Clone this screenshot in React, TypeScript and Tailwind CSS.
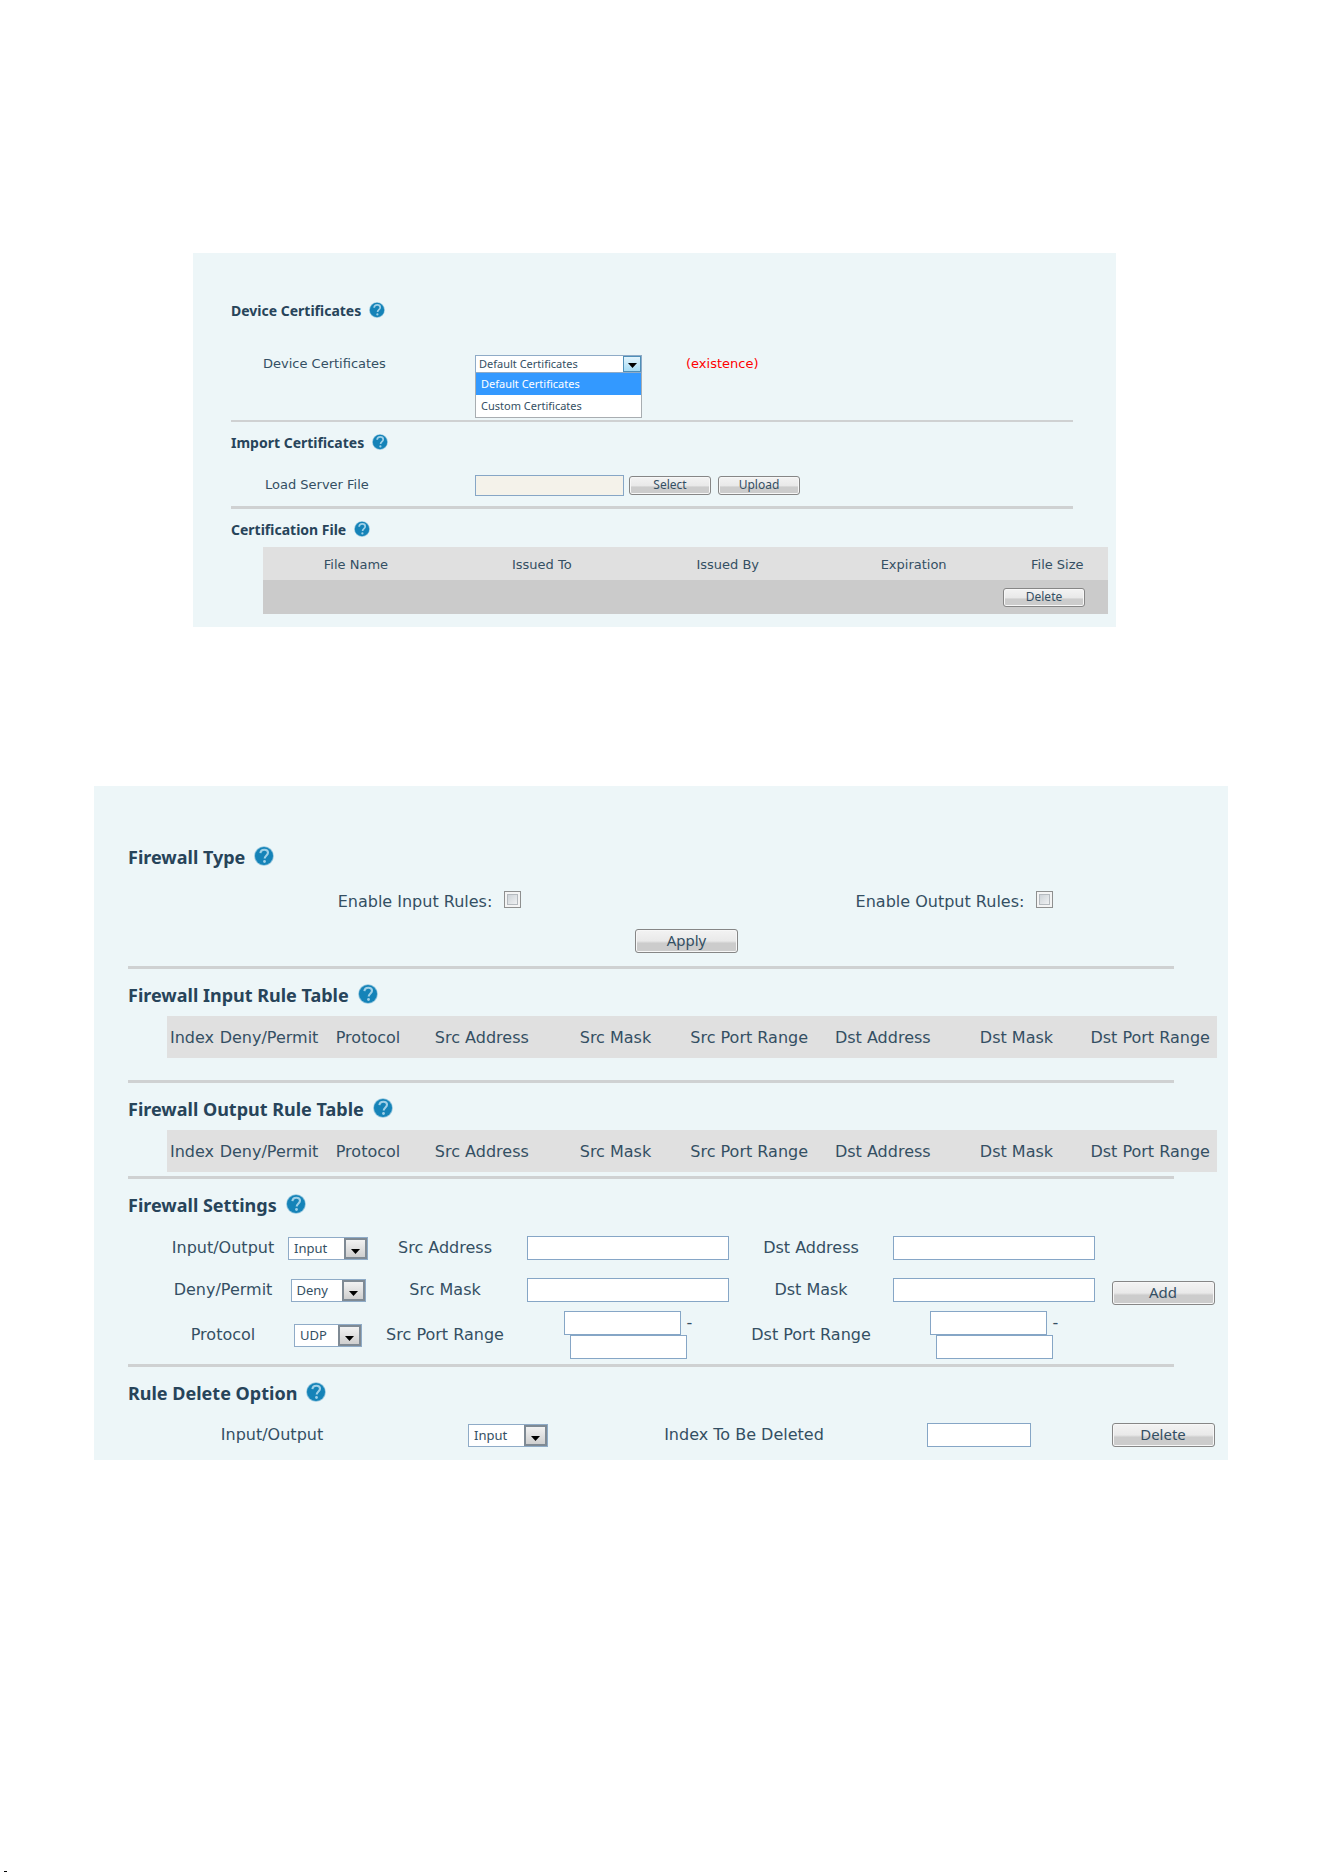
import { useState } from "react";
import type { ReactNode } from "react";
import clsx from "clsx";

type Size = "sm" | "lg";

const certificateOptions = ["Default Certificates", "Custom Certificates"];

const HelpIcon = ({ size }: { size: Size }) => (
  <svg viewBox="0 0 20 20" className={size === "sm" ? "size-4" : "size-5"} aria-hidden="true">
    <circle cx="10" cy="10" r="9.8" fill="#8fc3dc" />
    <circle cx="10" cy="10" r="9" fill="#1583b8" />
    <path
      d="M6.4 7.2C6.6 4.8 8.2 3.7 10.3 3.7c2.2 0 3.7 1.2 3.7 3.1 0 2.6-3.3 2.8-3.3 5.7"
      fill="none"
      stroke="#9fd0e7"
      strokeWidth="2.1"
    />
    <circle cx="10.5" cy="15.5" r="1.4" fill="#9fd0e7" />
  </svg>
);

const Heading = ({ size, className, children }: { size: Size; className?: string; children: ReactNode }) => (
  <div className={clsx("flex items-center", size === "sm" ? "h-5 gap-2" : "h-6 gap-[9px]", className)}>
    <h2
      className={clsx(
        "font-['Noto_Sans',sans-serif] font-bold text-[#27445a]",
        size === "sm" ? "text-[14px] leading-5" : "text-[18px] leading-6"
      )}
    >
      {children}
    </h2>
    <button type="button" aria-label="Help" className="mb-[3px]">
      <HelpIcon size={size} />
    </button>
  </div>
);

const Button = ({ size, children }: { size: Size; children: ReactNode }) => (
  <button
    type="button"
    className={clsx(
      "rounded-[3px] border border-[#868686] bg-linear-to-b from-[#f3f3f3] from-0% via-[#e9e9e9] via-50% to-[#cccccc] to-60% font-['Noto_Sans',sans-serif] shadow-[inset_0_0_0_1px_#f7f7f7]",
      size === "sm" ? "h-[19px] w-[82px] text-[12px] leading-4" : "h-6 w-[103px] pb-[2px] text-[15px] leading-5"
    )}
  >
    {children}
  </button>
);

const Arrow = () => (
  <svg viewBox="0 0 9 5" className="h-[5px] w-[9px]" aria-hidden="true">
    <path d="M0 0h9L4.5 5z" fill="#000" />
  </svg>
);

const Select = ({ id, options, className }: { id: string; options: string[]; className: string }) => (
  <div className={clsx("relative h-[23px]", className)}>
    <select
      id={id}
      className="block h-full w-full appearance-none border border-[#8fabc7] bg-white pl-[5px] font-['Noto_Sans',sans-serif] text-[13px] leading-5 outline-none"
    >
      {options.map((o) => (
        <option key={o}>{o}</option>
      ))}
    </select>
    <span className="pointer-events-none absolute inset-y-px right-px flex w-[23px] items-end justify-center border-2 border-[#7f8a94] bg-linear-to-b from-[#f2f2f2] to-[#cfcfcf] pb-[3px]">
      <Arrow />
    </span>
  </div>
);

const TextBox = ({ id, label, className }: { id: string; label?: string; className: string }) => (
  <input
    id={id}
    type="text"
    aria-label={label}
    className={clsx("block border border-[#86a6c6] bg-white px-1 outline-none", className)}
  />
);

const Divider = ({ className }: { className: string }) => (
  <hr className={clsx("border-0 bg-[#cfd1d2]", className)} />
);

const CheckField = ({ id, label }: { id: string; label: string }) => (
  <div className="flex h-6 items-center justify-center gap-3">
    <label htmlFor={id}>{label}</label>
    <input
      id={id}
      type="checkbox"
      className="mb-[5px] size-[17px] appearance-none border border-[#8e8f8f] bg-linear-to-br from-[#c3cad0] to-[#fafafa] shadow-[inset_0_0_0_2px_#f4f4f4,inset_0_0_0_3px_#b5babf] checked:from-[#5b7f9c] checked:to-[#5b7f9c]"
    />
  </div>
);

const RuleTable = () => (
  <table className="mt-[9px] ml-[39px] w-[calc(100%-39px)] table-fixed bg-[#e0e0e0]">
    <colgroup>
      <col className="w-[50px]" />
      <col className="w-[104px]" />
      <col className="w-[94px]" />
      <col span={6} />
    </colgroup>
    <thead>
      <tr className="h-[42px] whitespace-nowrap">
        <th className="pt-[2px] font-normal">Index</th>
        <th className="pt-[2px] font-normal">Deny/Permit</th>
        <th className="pt-[2px] font-normal">Protocol</th>
        <th className="pt-[2px] font-normal">Src Address</th>
        <th className="pt-[2px] font-normal">Src Mask</th>
        <th className="pt-[2px] font-normal">Src Port Range</th>
        <th className="pt-[2px] font-normal">Dst Address</th>
        <th className="pt-[2px] font-normal">Dst Mask</th>
        <th className="pt-[2px] font-normal">Dst Port Range</th>
      </tr>
    </thead>
  </table>
);

const PortRange = ({ id, label }: { id: string; label: string }) => (
  <div className="flex flex-col items-center">
    <div className="flex items-start gap-[6px]">
      <TextBox id={id} className="h-6 w-[117px]" />
      <span className="leading-6">-</span>
    </div>
    <TextBox id={`${id}-end`} label={`${label} end`} className="h-6 w-[117px]" />
  </div>
);

const CertificateSelect = () => {
  const [value, setValue] = useState(certificateOptions[0]);
  const [open, setOpen] = useState(true);

  return (
    <div className="relative w-[167px] font-['Noto_Sans',sans-serif] text-[11px]">
      <button
        id="device-cert"
        type="button"
        role="combobox"
        aria-expanded={open}
        aria-controls="device-cert-list"
        onClick={() => setOpen(!open)}
        className="flex h-[18px] w-full items-center justify-between border border-[#8fabc7] bg-white pl-[3px] text-left leading-4"
      >
        {value}
        <span className="flex h-4 w-[18px] items-end justify-center border border-[#4f8fb8] bg-linear-to-b from-[#e3f4fc] to-[#a4dbf5] pb-[3px]">
          <Arrow />
        </span>
      </button>
      {open && (
        <ul
          id="device-cert-list"
          role="listbox"
          aria-label="Device Certificates"
          className="absolute top-[18px] left-0 z-10 w-full border border-t-0 border-[#a8adb1] bg-white"
        >
          {certificateOptions.map((o) => (
            <li
              key={o}
              role="option"
              aria-selected={o === value}
              onClick={() => {
                setValue(o);
                setOpen(false);
              }}
              className={clsx("h-[22px] pl-[5px] leading-[22px]", o === value && "bg-[#3399ff] text-white")}
            >
              {o}
            </li>
          ))}
        </ul>
      )}
    </div>
  );
};

const CertificatesPanel = () => (
  <section className="mr-[208px] ml-[193px] bg-[#edf6f8] pt-12 pr-2 pb-[13px] pl-[38px] text-[13px] leading-5">
    <Heading size="sm">Device Certificates</Heading>
    <div className="mt-8 flex h-[21px] items-center pl-8">
      <label htmlFor="device-cert" className="w-[212px]">
        Device Certificates
      </label>
      <CertificateSelect />
      <span className="ml-11 text-[#ff0000]">(existence)</span>
    </div>
    <Divider className="mt-[46px] mr-[35px] h-[2px]" />

    <Heading size="sm" className="mt-[11px]">
      Import Certificates
    </Heading>
    <div className="mt-[21px] flex h-[22px] items-center pl-[34px]">
      <label htmlFor="server-file" className="w-[210px]">
        Load Server File
      </label>
      <input
        id="server-file"
        type="text"
        readOnly
        className="mr-[5px] h-[21px] w-[149px] border border-[#86a6c6] bg-[#f4f2ea] px-1 outline-none"
      />
      <div className="flex gap-[7px]">
        <Button size="sm">Select</Button>
        <Button size="sm">Upload</Button>
      </div>
    </div>
    <Divider className="mt-[10px] mr-[35px] h-[3px]" />

    <Heading size="sm" className="mt-[11px]">
      Certification File
    </Heading>
    <table className="mt-[7px] ml-8 w-[calc(100%-32px)] table-fixed">
      <thead>
        <tr className="h-[33px] bg-[#e0e0e0]">
          <th className="w-[22%] pt-[2px] font-normal">File Name</th>
          <th className="w-[22%] pt-[2px] font-normal">Issued To</th>
          <th className="w-[22%] pt-[2px] font-normal">Issued By</th>
          <th className="w-[22%] pt-[2px] font-normal">Expiration</th>
          <th className="w-[12%] pt-[2px] font-normal">File Size</th>
        </tr>
      </thead>
      <tbody>
        <tr className="h-[34px] bg-[#cbcbcb]">
          <td colSpan={5}>
            <div className="flex justify-end pr-[23px]">
              <Button size="sm">Delete</Button>
            </div>
          </td>
        </tr>
      </tbody>
    </table>
  </section>
);

const FirewallPanel = () => (
  <section className="mt-[159px] mr-24 ml-[94px] bg-[#edf6f8] pt-[59px] pr-[11px] pb-[13px] pl-[34px] text-[16px] leading-6">
    <Heading size="lg">Firewall Type</Heading>
    <div className="mt-[21px] grid grid-cols-2 pl-[39px]">
      <CheckField id="enable-input" label="Enable Input Rules:" />
      <CheckField id="enable-output" label="Enable Output Rules:" />
    </div>
    <div className="mt-[15px] flex justify-center pl-7">
      <Button size="lg">Apply</Button>
    </div>
    <Divider className="mt-[13px] mr-[43px] h-[3px]" />

    <Heading size="lg" className="mt-[14px]">
      Firewall Input Rule Table
    </Heading>
    <RuleTable />
    <Divider className="mt-[22px] mr-[43px] h-[3px]" />

    <Heading size="lg" className="mt-[14px]">
      Firewall Output Rule Table
    </Heading>
    <RuleTable />
    <Divider className="mt-1 mr-[43px] h-[3px]" />

    <Heading size="lg" className="mt-[14px]">
      Firewall Settings
    </Heading>
    <div className="mt-[10px] ml-[39px] grid grid-cols-[112fr_98fr_136fr_230fr_136fr_230fr_108fr] grid-rows-[42px_42px_48px] items-center justify-items-center whitespace-nowrap">
      <label htmlFor="direction">Input/Output</label>
      <Select id="direction" options={["Input", "Output"]} className="w-20" />
      <label htmlFor="src-address">Src Address</label>
      <TextBox id="src-address" className="h-6 w-[202px]" />
      <label htmlFor="dst-address">Dst Address</label>
      <TextBox id="dst-address" className="h-6 w-[202px]" />
      <div className="row-span-3">
        <Button size="lg">Add</Button>
      </div>

      <label htmlFor="action">Deny/Permit</label>
      <Select id="action" options={["Deny", "Permit"]} className="w-[75px]" />
      <label htmlFor="src-mask">Src Mask</label>
      <TextBox id="src-mask" className="h-6 w-[202px]" />
      <label htmlFor="dst-mask">Dst Mask</label>
      <TextBox id="dst-mask" className="h-6 w-[202px]" />

      <label htmlFor="protocol">Protocol</label>
      <Select id="protocol" options={["UDP", "TCP", "ICMP"]} className="w-[68px]" />
      <label htmlFor="src-port">Src Port Range</label>
      <PortRange id="src-port" label="Src Port Range" />
      <label htmlFor="dst-port">Dst Port Range</label>
      <PortRange id="dst-port" label="Dst Port Range" />
    </div>
    <Divider className="mt-[5px] mr-[43px] h-[3px]" />

    <Heading size="lg" className="mt-[14px]">
      Rule Delete Option
    </Heading>
    <div className="mt-[18px] ml-[39px] grid h-6 grid-cols-[210fr_262fr_210fr_260fr_108fr] items-center justify-items-center whitespace-nowrap">
      <label htmlFor="delete-direction">Input/Output</label>
      <Select id="delete-direction" options={["Input", "Output"]} className="w-20" />
      <label htmlFor="delete-index">Index To Be Deleted</label>
      <TextBox id="delete-index" className="h-6 w-[104px]" />
      <Button size="lg">Delete</Button>
    </div>
  </section>
);

export default function App() {
  return (
    <main className="flex min-h-screen flex-col bg-white pt-[253px] font-['DejaVu_Sans',Verdana,sans-serif] text-[#344f63]">
      <CertificatesPanel />
      <FirewallPanel />
      <div className="mt-auto ml-1 h-px w-[3px] bg-black" />
    </main>
  );
}
